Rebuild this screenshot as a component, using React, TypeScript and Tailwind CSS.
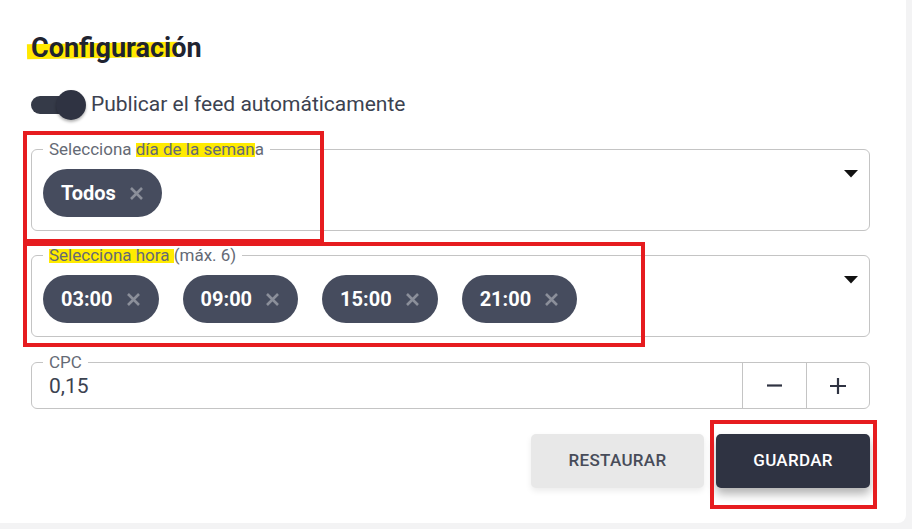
import React from "react";

const HOURS = ["03:00", "09:00", "15:00", "21:00"];

const mark =
    "bg-[linear-gradient(transparent_22%,#ffeb00_22%,#ffeb00_90%,transparent_90%)]";

function ChipX() {
    return (
        <svg width="15" height="15" viewBox="0 0 15 15" className="shrink-0">
            <path
                d="M2 2l11 11M13 2L2 13"
                stroke="#8b8f9a"
                strokeWidth="2.6"
                strokeLinecap="butt"
            />
        </svg>
    );
}

function Chip({ label }: { label: string }) {
    return (
        <div className="flex h-[48px] items-center gap-[13px] rounded-full bg-[#464c5e] pl-[18px] pr-[18px]">
            <span className="text-[20px] font-bold text-white">{label}</span>
            <ChipX />
        </div>
    );
}

function Caret() {
    return (
        <svg width="14" height="8" viewBox="0 0 14 8" className="mt-[20px] shrink-0">
            <path d="M0 0h14L7 7.5z" fill="#111" />
        </svg>
    );
}

function Legend({ children }: { children: React.ReactNode }) {
    return (
        <div className="absolute left-[11px] top-[-11px] bg-white px-[6px] text-[17px] leading-[20px] text-[#656a75]">
            {children}
        </div>
    );
}

function ChipField({ legend, chips }: { legend: React.ReactNode; chips: string[] }) {
    return (
        <div className="relative flex h-[82px] items-start rounded-[6px] border border-[#c4c4c4] pl-[11px] pr-[11px]">
            <Legend>{legend}</Legend>
            <div className="flex flex-1 gap-[24px] pt-[19px]">
                {chips.map((c) => (
                    <Chip key={c} label={c} />
                ))}
            </div>
            <Caret />
        </div>
    );
}

export default function App() {
    return (
        <div className="h-[529px] w-[912px] bg-[#f3f3f4] font-['Roboto',sans-serif]">
            <div className="relative flex h-[523px] w-[906px] flex-col rounded-br-[8px] bg-white pl-[31px] pr-[36px] pt-[33px]">
                {/* Title */}
                <div className="relative">
                    <div className="absolute left-[-4px] top-[10px] h-[15px] w-[150px] -rotate-1 bg-[#ffe800]" />
                    <h1 className="relative text-[27px] font-bold leading-[30px] text-[#1f2330]">
                        Configuración
                    </h1>
                </div>

                {/* Toggle */}
                <div className="mt-[27px] flex h-[30px] items-center gap-[5px]">
                    <div className="relative h-[30px] w-[55px]">
                        <div className="absolute left-0 top-[6px] h-[18px] w-[46px] rounded-full bg-[#353a48]" />
                        <div className="absolute left-[25px] top-0 h-[30px] w-[30px] rounded-full bg-[#2f3342] shadow-[0_2px_3px_rgba(0,0,0,0.3)]" />
                    </div>
                    <span className="text-[21px] text-[#3c4250]">
                        Publicar el feed automáticamente
                    </span>
                </div>

                {/* Day of week */}
                <div className="mt-[29px]">
                    <ChipField
                        legend={
                            <>
                                Selecciona <span className={mark}>día de la seman</span>a
                            </>
                        }
                        chips={["Todos"]}
                    />
                </div>

                {/* Hours */}
                <div className="mt-[24px]">
                    <ChipField
                        legend={
                            <>
                                <span className={mark}>Selecciona hora </span>(máx. 6)
                            </>
                        }
                        chips={HOURS}
                    />
                </div>

                {/* CPC */}
                <div className="relative mt-[25px] flex h-[47px] rounded-[6px] border border-[#c4c4c4]">
                    <Legend>CPC</Legend>
                    <div className="flex flex-1 items-center pl-[17px] pt-[2px] text-[21px] text-[#3c4250]">
                        0,15
                    </div>
                    <div className="flex w-[64px] items-center justify-center border-l border-[#c4c4c4]">
                        <svg width="15" height="3" viewBox="0 0 15 3">
                            <path d="M0 1.5h15" stroke="#2f3342" strokeWidth="2.2" />
                        </svg>
                    </div>
                    <div className="flex w-[63px] items-center justify-center border-l border-[#c4c4c4]">
                        <svg width="16" height="16" viewBox="0 0 16 16">
                            <path d="M0 8h16M8 0v16" stroke="#2f3342" strokeWidth="2.2" />
                        </svg>
                    </div>
                </div>

                {/* Actions */}
                <div className="mt-[25px] flex justify-end gap-[12px]">
                    <button
                        type="button"
                        className="h-[54px] w-[173px] rounded-[5px] bg-[#e8e8e8] text-[17px] font-medium tracking-[0.3px] text-[#474c59] shadow-[0_3px_6px_rgba(0,0,0,0.08)]"
                    >
                        RESTAURAR
                    </button>
                    <button
                        type="button"
                        className="h-[54px] w-[154px] rounded-[5px] bg-[#2f3342] text-[17px] font-medium tracking-[0.3px] text-white shadow-[0_6px_10px_rgba(0,0,0,0.3)]"
                    >
                        GUARDAR
                    </button>
                </div>

                {/* Annotation boxes */}
                <div className="absolute left-[23px] top-[131px] h-[112px] w-[301px] border-[4px] border-[#e61c1f]" />
                <div className="absolute left-[23px] top-[242px] h-[105px] w-[622px] border-[4px] border-[#e61c1f]" />
                <div className="absolute left-[710px] top-[420px] h-[89px] w-[167px] border-[4px] border-[#e61c1f]" />
            </div>
        </div>
    );
}
